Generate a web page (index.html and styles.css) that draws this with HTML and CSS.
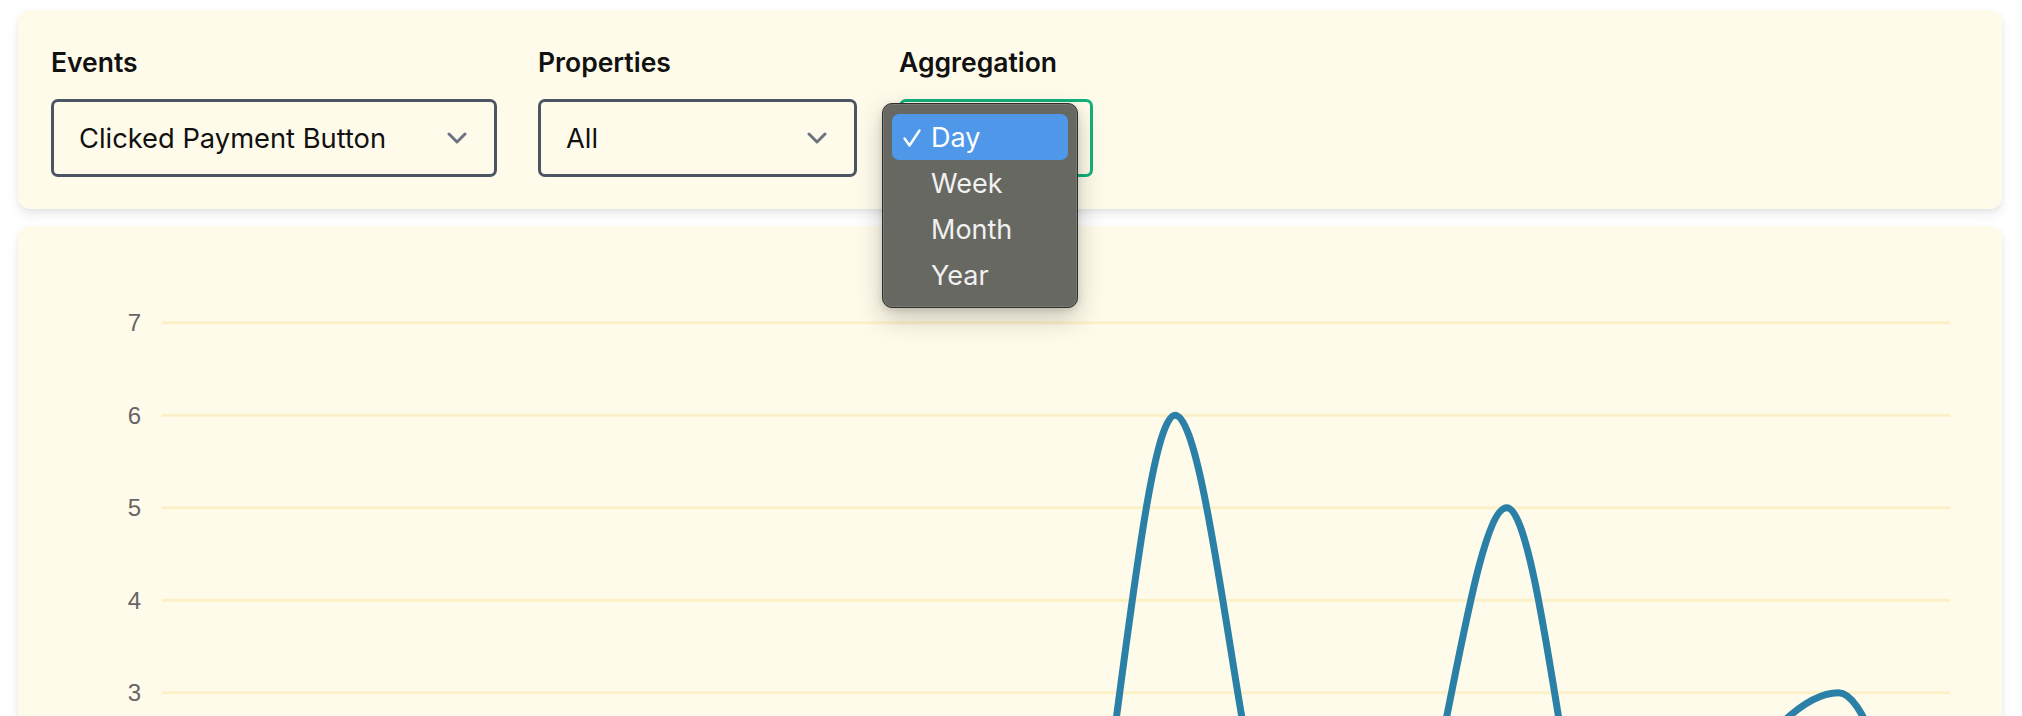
FILE: index.html
```html
<!DOCTYPE html>
<html lang="en">
<head>
<meta charset="utf-8">
<title>Events</title>
<link rel="stylesheet" href="styles.css">
</head>
<body>
<div class="page">
  <section class="card filters">
    <div class="field field-events">
      <label class="field-label">Events</label>
      <div class="select">
        <span class="select-value">Clicked Payment Button</span>
        <svg class="chevron" width="20" height="12" viewBox="0 0 20 12"><path d="M2 2 L10 10 L18 2" fill="none" stroke="#6b7280" stroke-width="3" stroke-linecap="round" stroke-linejoin="round"/></svg>
      </div>
    </div>
    <div class="field field-props">
      <label class="field-label">Properties</label>
      <div class="select">
        <span class="select-value">All</span>
        <svg class="chevron" width="20" height="12" viewBox="0 0 20 12"><path d="M2 2 L10 10 L18 2" fill="none" stroke="#6b7280" stroke-width="3" stroke-linecap="round" stroke-linejoin="round"/></svg>
      </div>
    </div>
    <div class="field field-agg">
      <label class="field-label">Aggregation</label>
      <div class="select-wrap">
        <div class="select select-focused">
          <span class="select-value">Day</span>
          <svg class="chevron" width="20" height="12" viewBox="0 0 20 12"><path d="M2 2 L10 10 L18 2" fill="none" stroke="#6b7280" stroke-width="3" stroke-linecap="round" stroke-linejoin="round"/></svg>
        </div>
        <ul class="menu">
          <li class="menu-item is-selected">
            <svg class="check" width="20" height="20" viewBox="0 0 20 20"><path d="M2.5 10.5 L7.5 17.5 L17.5 2.5" fill="none" stroke="#ffffff" stroke-width="2.4" stroke-linecap="round" stroke-linejoin="round"/></svg>
            <span>Day</span>
          </li>
          <li class="menu-item"><span>Week</span></li>
          <li class="menu-item"><span>Month</span></li>
          <li class="menu-item"><span>Year</span></li>
        </ul>
      </div>
    </div>
  </section>

  <section class="card chart-card">
    <svg class="chart" width="1984" height="600" viewBox="0 0 1984 600">
      <g class="grid">
        <line x1="144" x2="1932" y1="96.7" y2="96.7"/>
        <line x1="144" x2="1932" y1="189.2" y2="189.2"/>
        <line x1="144" x2="1932" y1="281.7" y2="281.7"/>
        <line x1="144" x2="1932" y1="374.2" y2="374.2"/>
        <line x1="144" x2="1932" y1="466.7" y2="466.7"/>
        <line x1="144" x2="1932" y1="559.2" y2="559.2"/>
      </g>
      <g class="ticks">
        <text x="123" y="105.2">7</text>
        <text x="123" y="197.7">6</text>
        <text x="123" y="290.2">5</text>
        <text x="123" y="382.7">4</text>
        <text x="123" y="475.2">3</text>
      </g>
      <path id="series" class="series" d=""/>
    </svg>
  </section>
</div>
<script src="script.js"></script>
</body>
</html>
```

FILE: styles.css
```css
* { box-sizing: border-box; }

html, body {
  margin: 0;
  padding: 0;
  background: #ffffff;
}

body {
  font-family: Inter, "Noto Sans", "Liberation Sans", sans-serif;
  color: #111111;
  overflow: hidden;
}

.page {
  padding: 10px 20px 0 18px;
  display: flex;
  flex-direction: column;
  gap: 17px;
}

.card {
  background: #fffbea;
  border-radius: 12px;
  box-shadow: 0 6px 12px rgba(0, 0, 0, 0.07), 0 2px 5px rgba(0, 0, 0, 0.05);
}

.filters {
  display: flex;
  align-items: flex-start;
  gap: 41px;
  padding: 36px 33px 32px;
}

.field {
  display: flex;
  flex-direction: column;
  gap: 21px;
}

.field-label {
  font-size: 26.5px;
  line-height: 32px;
  font-weight: 600;
  color: #111111;
}

.select {
  height: 78px;
  border: 3px solid #4b5563;
  border-radius: 7px;
  display: flex;
  align-items: center;
  justify-content: space-between;
  padding: 0 27px 0 25px;
  font-size: 27.3px;
  color: #111111;
}

.field-events .select { width: 446px; }
.field-props .select { width: 319px; }
.field-agg { margin-left: 1px; }
.field-agg .select { width: 194px; }

.select-focused {
  border-color: #12b07c;
}

.chevron { flex: none; }

.select-wrap {
  position: relative;
}

.menu {
  position: absolute;
  top: 4px;
  left: -17px;
  width: 196px;
  margin: 0;
  padding: 10px 9px 9px;
  list-style: none;
  background: #676862;
  border: 1px solid #2f302c;
  border-radius: 10px;
  box-shadow: inset 0 0 0 1px rgba(255, 255, 255, 0.12), 0 10px 26px rgba(0, 0, 0, 0.22), 0 2px 6px rgba(0, 0, 0, 0.12);
}

.menu-item {
  position: relative;
  height: 46px;
  display: flex;
  align-items: center;
  padding-left: 39px;
  font-size: 27px;
  color: #f1f1ef;
  border-radius: 7px;
}

.menu-item.is-selected {
  background: #4f97e8;
  color: #ffffff;
}

.check {
  position: absolute;
  left: 10px;
  top: 14px;
}

.chart-card {
  height: 600px;
  overflow: hidden;
}

.chart {
  display: block;
}

.grid line {
  stroke: #fcf1c6;
  stroke-width: 3;
}

.ticks text {
  font-family: "Liberation Sans", Arial, sans-serif;
  font-size: 24px;
  fill: #666666;
  text-anchor: end;
}

.series {
  fill: none;
  stroke: #2b80a8;
  stroke-width: 7;
  stroke-linejoin: round;
  stroke-linecap: round;
}
```

FILE: script.js
```js
(function () {
  var values = [0, 0, 0, 0, 0, 0, 0, 0, 0, 6, 1, 1, 5, 0, 2, 3, 0];
  var spacing = 110.6;
  var peakX = 1157;
  var top = 96.7;
  var step = 92.5;
  function yOf(v) { return top + (7 - v) * step; }

  var pts = values.map(function (v, i) {
    return { x: peakX - (9 - i) * spacing, y: yOf(v) };
  });
  var n = pts.length;

  /* monotone cubic interpolation (Fritsch-Carlson) */
  var delta = [], m = [];
  for (var i = 0; i < n - 1; i++) {
    delta[i] = (pts[i + 1].y - pts[i].y) / (pts[i + 1].x - pts[i].x);
  }
  function sign(v) { return v > 0 ? 1 : v < 0 ? -1 : 0; }
  for (i = 0; i < n; i++) {
    if (i === 0) m[i] = delta[0];
    else if (i === n - 1) m[i] = delta[n - 2];
    else if (sign(delta[i - 1]) !== sign(delta[i])) m[i] = 0;
    else m[i] = (delta[i - 1] + delta[i]) / 2;
  }
  for (i = 0; i < n - 1; i++) {
    if (Math.abs(delta[i]) < 1e-9) { m[i] = 0; m[i + 1] = 0; continue; }
    var a = m[i] / delta[i], b = m[i + 1] / delta[i];
    var sq = a * a + b * b;
    if (sq <= 9) continue;
    var tau = 3 / Math.sqrt(sq);
    m[i] = a * tau * delta[i];
    m[i + 1] = b * tau * delta[i];
  }

  var d = 'M' + pts[0].x.toFixed(2) + ' ' + pts[0].y.toFixed(2);
  for (i = 1; i < n; i++) {
    var p = pts[i - 1], q = pts[i];
    var dx = (q.x - p.x) / 3;
    d += ' C' + (p.x + dx).toFixed(2) + ' ' + (p.y + m[i - 1] * dx).toFixed(2) + ' ' +
      (q.x - dx).toFixed(2) + ' ' + (q.y - m[i] * dx).toFixed(2) + ' ' +
      q.x.toFixed(2) + ' ' + q.y.toFixed(2);
  }
  document.getElementById('series').setAttribute('d', d);
})();
```
